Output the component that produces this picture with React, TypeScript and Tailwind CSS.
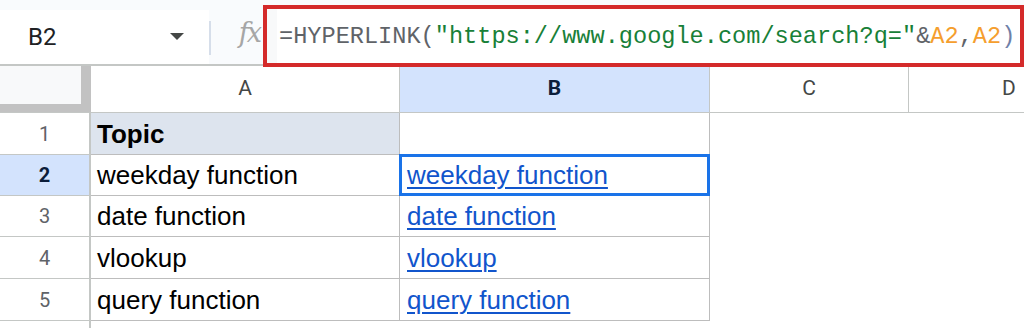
import React from 'react'

const rows = [
  { n: '1', a: 'Topic', b: '', head: true },
  { n: '2', a: 'weekday function', b: 'weekday function' },
  { n: '3', a: 'date function', b: 'date function' },
  { n: '4', a: 'vlookup', b: 'vlookup' },
  { n: '5', a: 'query function', b: 'query function' },
]

const heights = ['h-[42px]', 'h-[41px]', 'h-[41px]', 'h-[42px]', 'h-[42px]']

export default function App() {
  return (
    <div className="w-[1024px] h-[328px] overflow-hidden bg-white font-['Roboto',sans-serif]">
      {/* formula bar */}
      <div className="relative z-10 flex items-start h-[66px] border-b-2 border-[#c4c7c5] bg-[#f9fbfd]">
        <div className="mt-[10px] h-[54px] w-[209px] bg-white flex items-center justify-between pl-[28px] pr-[25px]">
          <span className="text-[24px] text-[#202124]">B2</span>
          <svg width="14" height="8" viewBox="0 0 14 8">
            <path d="M0 0 L14 0 L7 7 Z" fill="#444746" />
          </svg>
        </div>
        <div className="mt-[21px] h-[34px] w-[2px] bg-[#d6deea]" />
        <div className="w-[52px] h-[66px] flex items-center justify-end pr-[3px]">
          <span className="font-['DejaVu_Serif',serif] italic text-[27px] text-[#a6a6a6] tracking-[-2px]">fx</span>
        </div>
        <div className="mt-[5px] h-[62px] flex-1 flex border-[4px] border-[#d42a2a] bg-white">
          <div className="w-[10px] bg-[#f8f9fa]" />
          <div className="flex-1 flex items-center pl-[2px] pt-[1px] font-['Liberation_Mono',monospace] text-[23.6px] whitespace-nowrap">
            <span className="text-[#5f6368]">=HYPERLINK(</span>
            <span className="text-[#188038]">"https://www.google.com/search?q="</span>
            <span className="text-[#5f6368]">&amp;</span>
            <span className="text-[#f59e2e]">A2</span>
            <span className="text-[#5f6368]">,</span>
            <span className="text-[#f59e2e]">A2</span>
            <span className="text-[#6f7fa8]">)</span>
          </div>
        </div>
      </div>

      {/* column headers */}
      <div className="grid grid-cols-[91px_309px_310px_199px_200px] h-[47px] text-[21px] text-[#444746]">
        <div className="bg-[#c2c2c2] border-b border-[#c4c7c5]">
          <div className="w-[81px] h-[38px] bg-[#f8f9fa]" />
        </div>
        <div className="flex items-center justify-center border-r border-b border-[#c4c7c5]">A</div>
        <div className="flex items-center justify-center border-r border-b border-[#c4c7c5] bg-[#d3e3fd] font-bold text-[#0b1d3a]">B</div>
        <div className="flex items-center justify-center border-r border-b border-[#c4c7c5]">C</div>
        <div className="flex items-center justify-center border-b border-[#c4c7c5]">D</div>
      </div>

      {/* rows */}
      {rows.map((r, i) => (
        <div key={r.n} className={`grid grid-cols-[91px_309px_310px_1fr] ${heights[i]}`}>
          <div
            className={`flex items-center justify-center border-r-2 border-b border-[#c4c7c5] text-[20px] ${
              r.n === '2' ? 'bg-[#d3e3fd] font-bold text-[#0b1d3a]' : 'text-[#5f6368]'
            }`}
          >
            {r.n}
          </div>
          <div
            className={`flex items-center pl-[6px] pt-[1px] border-r border-b border-[#bdbdbd] font-['Liberation_Sans',Arial,sans-serif] text-[26px] text-black ${
              r.head ? 'bg-[#dde4ee] font-bold' : ''
            }`}
          >
            {r.a}
          </div>
          <div className="relative flex items-center pl-[7px] pt-[1px] border-r border-b border-[#bdbdbd] font-['Liberation_Sans',Arial,sans-serif] text-[26px]">
            {r.b && <span className="text-[#1155cc] underline underline-offset-[3px] decoration-[1.5px]">{r.b}</span>}
            {r.n === '2' && (
              <div className="absolute left-[-1px] top-[-1px] right-[-1px] bottom-[-1px] border-[3px] border-[#1a73e8]" />
            )}
          </div>
          <div className="bg-white" />
        </div>
      ))}
      <div className="grid grid-cols-[91px_1fr] h-[20px]">
        <div className="border-r-2 border-[#c4c7c5]" />
        <div />
      </div>
    </div>
  )
}
